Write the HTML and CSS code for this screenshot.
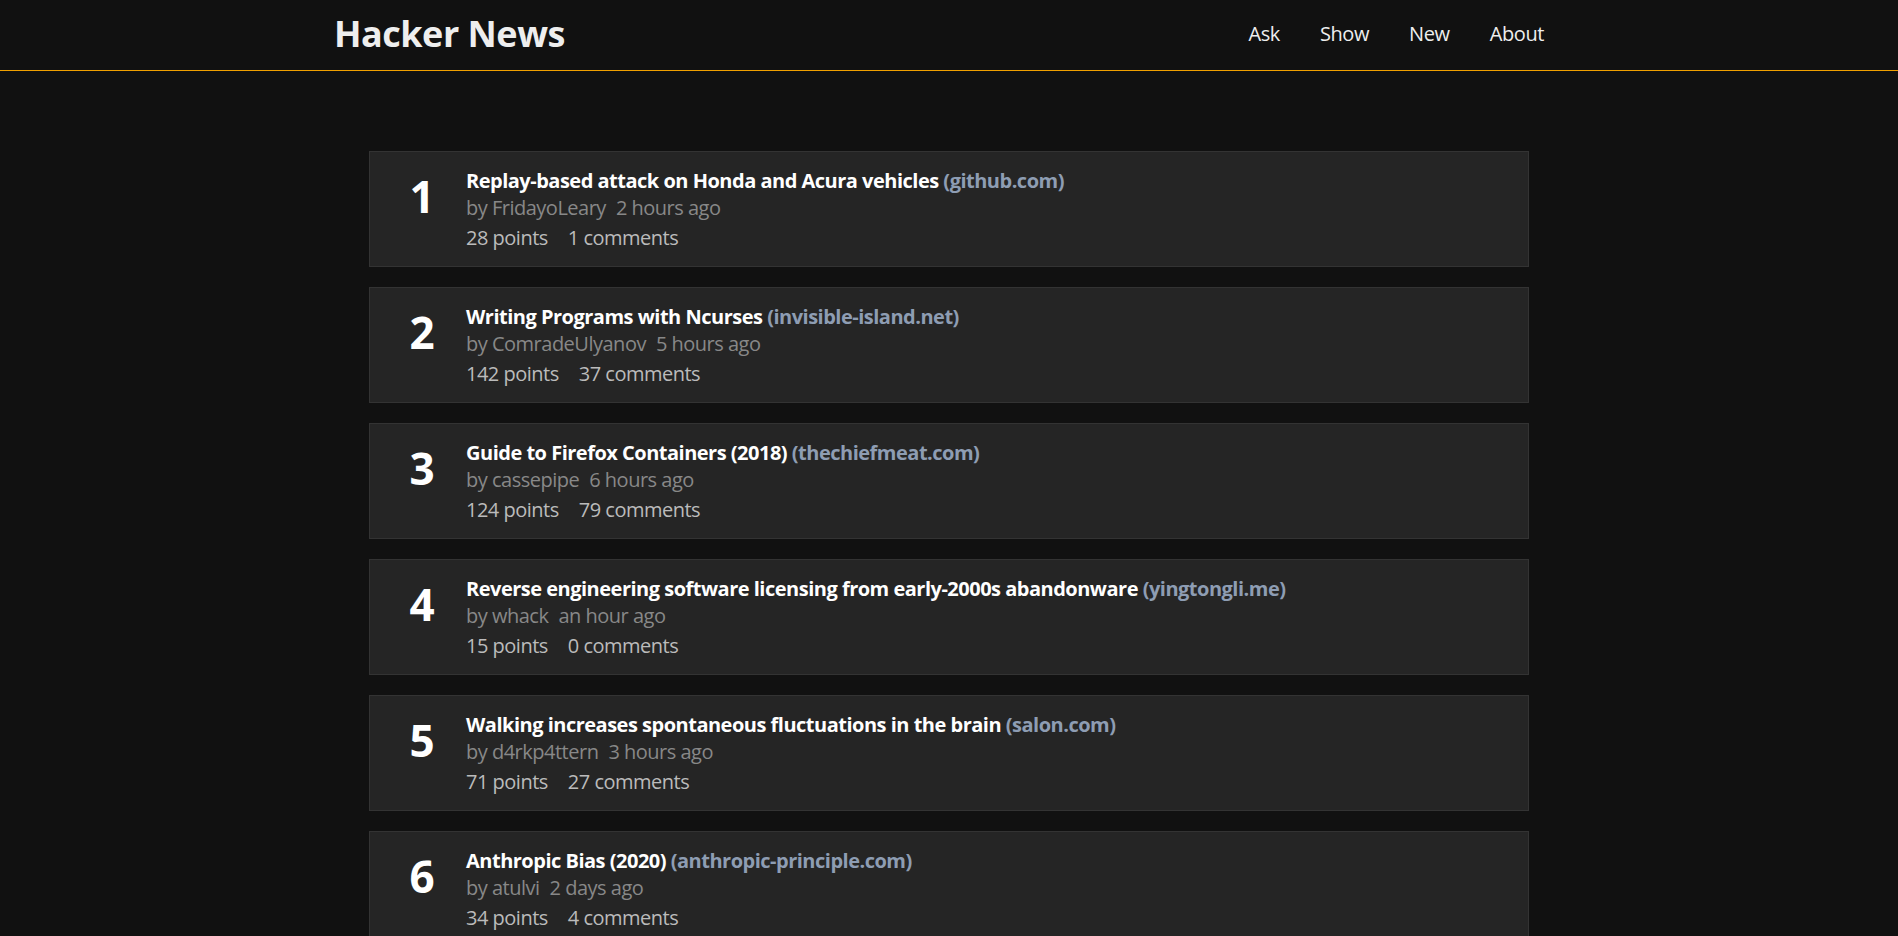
FILE: index.html
```html
<!DOCTYPE html>
<html lang="en">
<head>
<meta charset="utf-8">
<title>Hacker News</title>
<link rel="stylesheet" href="styles.css">
</head>
<body>
<header class="site-header">
  <div class="header-inner">
    <a class="brand" href="#">Hacker News</a>
    <nav class="nav">
      <a href="#">Ask</a>
      <a href="#">Show</a>
      <a href="#">New</a>
      <a href="#">About</a>
    </nav>
  </div>
</header>
<main class="stories">
  <article class="story">
    <div class="rank">1</div>
    <div class="body">
      <div class="title"><a href="#">Replay-based attack on Honda and Acura vehicles</a> <span class="domain">(github.com)</span></div>
      <div class="meta"><span class="by">by FridayoLeary</span><span>2 hours ago</span></div>
      <div class="stats"><span class="points">28 points</span><span>1 comments</span></div>
    </div>
  </article>
  <article class="story">
    <div class="rank">2</div>
    <div class="body">
      <div class="title"><a href="#">Writing Programs with Ncurses</a> <span class="domain">(invisible-island.net)</span></div>
      <div class="meta"><span class="by">by ComradeUlyanov</span><span>5 hours ago</span></div>
      <div class="stats"><span class="points">142 points</span><span>37 comments</span></div>
    </div>
  </article>
  <article class="story">
    <div class="rank">3</div>
    <div class="body">
      <div class="title"><a href="#">Guide to Firefox Containers (2018)</a> <span class="domain">(thechiefmeat.com)</span></div>
      <div class="meta"><span class="by">by cassepipe</span><span>6 hours ago</span></div>
      <div class="stats"><span class="points">124 points</span><span>79 comments</span></div>
    </div>
  </article>
  <article class="story">
    <div class="rank">4</div>
    <div class="body">
      <div class="title"><a href="#">Reverse engineering software licensing from early-2000s abandonware</a> <span class="domain">(yingtongli.me)</span></div>
      <div class="meta"><span class="by">by whack</span><span>an hour ago</span></div>
      <div class="stats"><span class="points">15 points</span><span>0 comments</span></div>
    </div>
  </article>
  <article class="story">
    <div class="rank">5</div>
    <div class="body">
      <div class="title"><a href="#">Walking increases spontaneous fluctuations in the brain</a> <span class="domain">(salon.com)</span></div>
      <div class="meta"><span class="by">by d4rkp4ttern</span><span>3 hours ago</span></div>
      <div class="stats"><span class="points">71 points</span><span>27 comments</span></div>
    </div>
  </article>
  <article class="story">
    <div class="rank">6</div>
    <div class="body">
      <div class="title"><a href="#">Anthropic Bias (2020)</a> <span class="domain">(anthropic-principle.com)</span></div>
      <div class="meta"><span class="by">by atulvi</span><span>2 days ago</span></div>
      <div class="stats"><span class="points">34 points</span><span>4 comments</span></div>
    </div>
  </article>
</main>
</body>
</html>
```

FILE: styles.css
```css
* { box-sizing: border-box; }
html, body {
  margin: 0;
  padding: 0;
  background: #111111;
  color: #eeeeee;
  font-family: "Open Sans", "Noto Sans", sans-serif;
}
a { color: inherit; text-decoration: none; }

.site-header {
  background: #111111;
  border-bottom: 1px solid #f0a000;
}
.header-inner {
  width: 1230px;
  margin: 0 auto;
  height: 70px;
  padding-bottom: 4px;
  display: flex;
  align-items: center;
  justify-content: space-between;
}
.brand {
  font-size: 36px;
  font-weight: 700;
  letter-spacing: -0.5px;
  color: #eeeeee;
}
.nav { display: flex; }
.nav a {
  font-size: 20px;
  letter-spacing: -0.4px;
  padding: 0 20px;
  color: #eeeeee;
}

.stories {
  width: 1160px;
  margin: 0 auto;
  padding: 80px 0 40px;
  display: flex;
  flex-direction: column;
  gap: 20px;
}
.story {
  background: #252525;
  border: 1px solid #333333;
  padding: 15px 20px;
  display: flex;
  align-items: flex-start;
}
.rank {
  width: 64px;
  margin-right: 12px;
  text-align: center;
  font-size: 44px;
  font-weight: 700;
  line-height: 58px;
  color: #ffffff;
}
.body { flex: 1; }
.title {
  font-size: 20px;
  line-height: 27px;
  font-weight: 700;
  letter-spacing: -0.5px;
  color: #ffffff;
}
.domain { color: #8e9db3; }
.meta {
  font-size: 20px;
  line-height: 27px;
  letter-spacing: -0.5px;
  color: #888888;
}
.meta .by { margin-right: 10px; }
.stats {
  margin-top: 3px;
  font-size: 20px;
  line-height: 27px;
  letter-spacing: -0.5px;
  color: #bbbbbb;
}
.stats .points { margin-right: 20px; }
```
